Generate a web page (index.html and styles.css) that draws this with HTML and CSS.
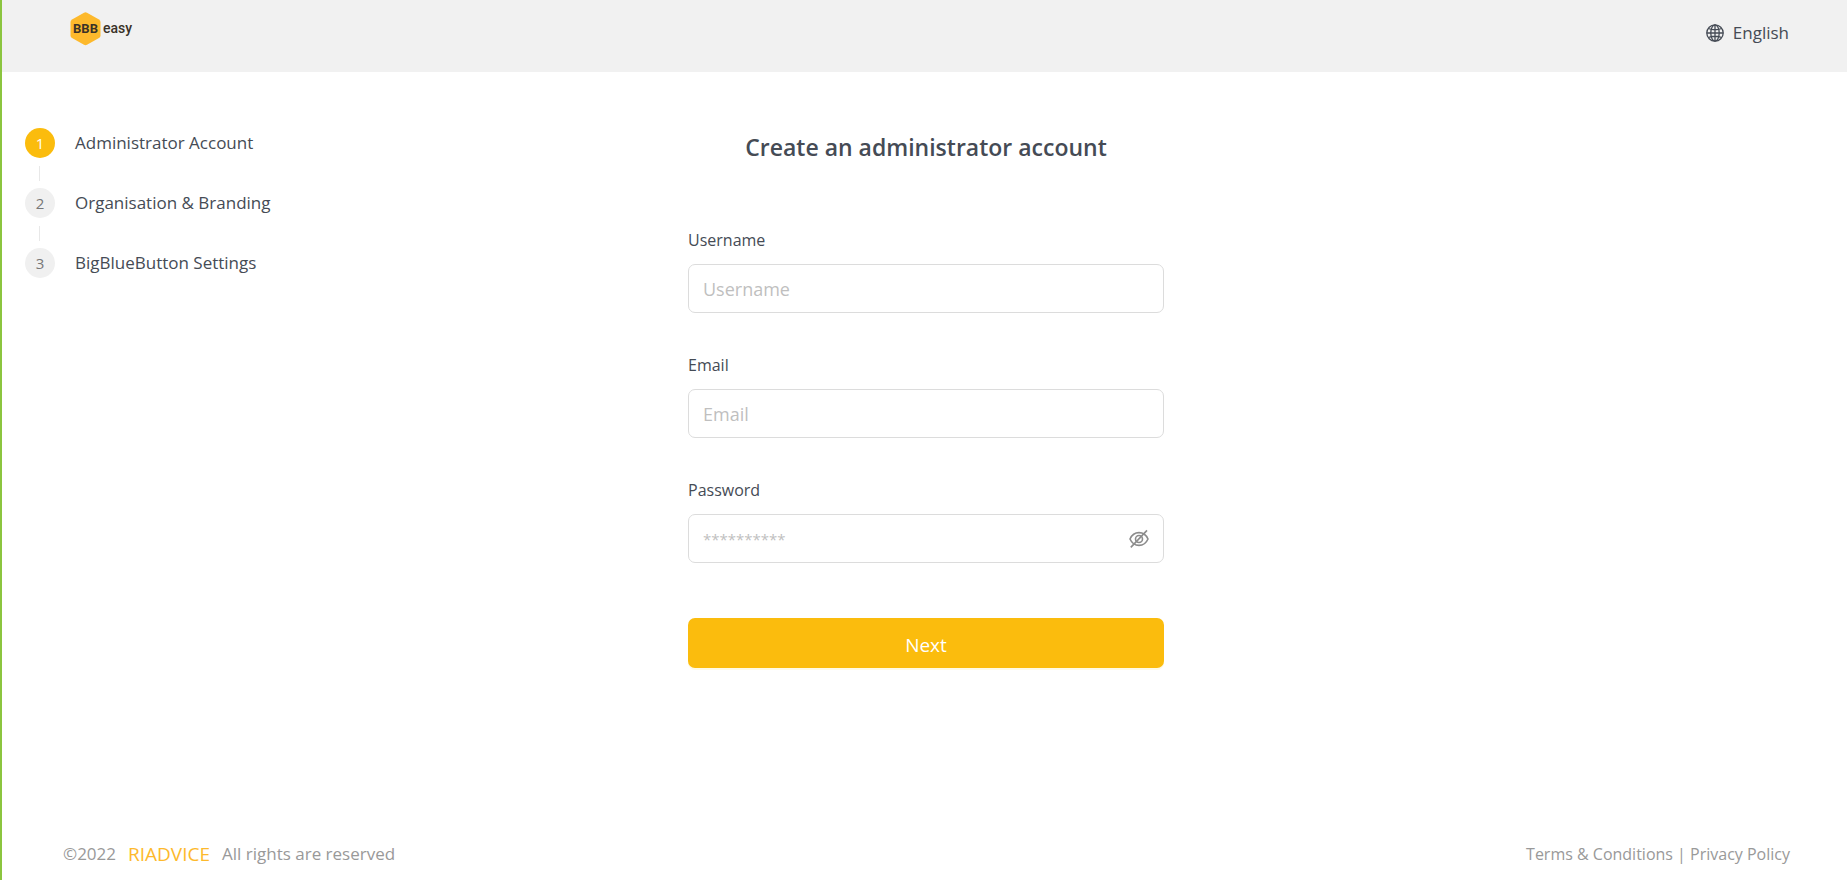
FILE: index.html
```html
<!DOCTYPE html>
<html lang="en">
<head>
<meta charset="utf-8">
<meta name="viewport" content="width=device-width, initial-scale=1">
<title>BBB easy</title>
<link rel="stylesheet" href="styles.css">
</head>
<body class="page">
  <header class="header">
    <a class="logo" href="#" aria-label="BBB easy">
      <svg class="logo-mark" viewBox="0 0 64 34" aria-hidden="true">
        <path d="M14 .7Q15.500 0 17 .7L29 7.500Q30.500 8.500 30.500 10V23.500Q30.500 25 29 26L17 32.800Q15.500 33.600 14 32.800L2 26Q.5 25 .5 23.500V10Q.5 8.500 2 7.500Z" fill="#fdb92c"/>
        <text class="logo-bbb" x="15.500" y="21" text-anchor="middle">BBB</text>
        <text class="logo-easy" x="33" y="21">easy</text>
      </svg>
    </a>
    <button class="language" type="button">
      <svg class="globe" viewBox="0 0 18 18" fill="none" stroke="currentColor" stroke-width="1.300" aria-hidden="true">
        <circle cx="9" cy="9" r="8.200"/>
        <ellipse cx="9" cy="9" rx="4.200" ry="8.200"/>
        <path d="M9 .8V17.200M.8 9H17.200M2.400 4.500Q9 7 15.600 4.500M2.400 13.500Q9 11 15.600 13.500"/>
      </svg>
      <span>English</span>
    </button>
  </header>

  <main class="main">
    <ol class="steps">
      <li class="step step-active"><span class="step-number">1</span><span>Administrator Account</span></li>
      <li class="step"><span class="step-number">2</span><span>Organisation &amp; Branding</span></li>
      <li class="step"><span class="step-number">3</span><span>BigBlueButton Settings</span></li>
    </ol>

    <form class="form">
      <h1 class="title">Create an administrator account</h1>
      <div class="field">
        <label class="label" for="username">Username</label>
        <div class="control"><input class="input" id="username" type="text" placeholder="Username"></div>
      </div>
      <div class="field">
        <label class="label" for="email">Email</label>
        <div class="control"><input class="input" id="email" type="email" placeholder="Email"></div>
      </div>
      <div class="field">
        <label class="label" for="password">Password</label>
        <div class="control">
          <input class="input input-password" id="password" type="password" placeholder="**********">
          <button class="reveal" type="button" aria-label="Show password">
            <svg class="eye" viewBox="0 0 20 20" fill="none" stroke="currentColor" stroke-width="1.600" aria-hidden="true">
              <path d="M1 10C3 5.500 6 3.600 10 3.600S17 5.500 19 10C17 14.500 14 16.400 10 16.400S3 14.500 1 10Z"/>
              <circle cx="10" cy="10" r="3.500"/>
              <path d="M18 1.400 1.800 18.400"/>
            </svg>
          </button>
        </div>
      </div>
      <button class="next" type="submit">Next</button>
    </form>
  </main>

  <footer class="footer">
    <p class="copyright"><span>©2022</span><a class="brand" href="#">RIADVICE</a><span>All rights are reserved</span></p>
    <p class="legal"><a class="legal-link" href="#">Terms &amp; Conditions</a> | <a class="legal-link" href="#">Privacy Policy</a></p>
  </footer>
</body>
</html>
```
FILE: styles.css
```css
* {
  box-sizing: border-box;
}

.page {
  display: flex;
  flex-direction: column;
  min-height: 100vh;
  margin: 0;
  border-left: 2px solid #8bc53f;
  background: #fff;
  color: #454b55;
  font-family: "Segoe UI", "Open Sans", "Noto Sans", sans-serif;
  font-size: 17px;
  line-height: 24px;
}

.header {
  display: flex;
  justify-content: space-between;
  align-items: flex-start;
  min-height: 72px;
  padding: 12px 58px 0 68px;
  background: #f1f1f1;
}

.logo {
  display: flex;
}

.logo-mark {
  width: 64px;
  height: 34px;
}

.logo-bbb,
.logo-easy {
  font-family: Roboto, sans-serif;
  font-weight: 700;
  fill: #3a3228;
}

.logo-bbb {
  font-size: 13px;
}

.logo-easy {
  font-size: 14px;
  font-weight: 500;
}

.language {
  display: flex;
  align-items: center;
  gap: 9px;
  margin: 0;
  padding: 9px 0 0;
  border: 0;
  background: none;
  color: inherit;
  font: inherit;
}

.globe {
  width: 18px;
  height: 18px;
}

.main {
  display: grid;
  flex: 1;
  grid-template-columns: 1fr minmax(0, 476px) 1fr;
  align-items: start;
  padding: 56px 20px 0 23px;
}

.steps {
  display: grid;
  gap: 30px;
  margin: 0;
  padding: 0;
  list-style: none;
}

.step {
  position: relative;
  display: flex;
  align-items: center;
  gap: 20px;
  height: 30px;
}

.step:not(:last-child)::after {
  position: absolute;
  top: 38px;
  left: 14px;
  width: 1px;
  height: 15px;
  background: #e8e8e8;
  content: "";
}

.step-number {
  width: 30px;
  height: 30px;
  border-radius: 50%;
  background: #f0f0f0;
  color: #777;
  font-size: 15px;
  line-height: 30px;
  text-align: center;
}

.step-active .step-number {
  background: #fbbc0d;
  color: #fff;
}

.form {
  display: flex;
  flex-direction: column;
}

.title {
  margin: 0 0 65px;
  padding-top: 3px;
  font-size: 23px;
  font-weight: 600;
  line-height: 32px;
  text-align: center;
}

.field {
  margin-bottom: 40px;
}

.label {
  display: block;
  margin-bottom: 12px;
  font-size: 16px;
}

.control {
  display: flex;
  align-items: center;
  height: 49px;
  padding: 0 14px;
  border: 1px solid #dcdcdc;
  border-radius: 7px;
}

.input {
  flex: 1;
  min-width: 0;
  padding: 0;
  border: 0;
  outline: 0;
  background: none;
  color: inherit;
  font: inherit;
  font-size: 18px;
}

.input::placeholder {
  color: #bfbfbf;
}

.input-password {
  font-size: 15px;
}

.reveal {
  display: flex;
  padding: 0;
  border: 0;
  background: none;
  color: #8c8c8c;
}

.eye {
  width: 20px;
  height: 20px;
}

.next {
  height: 50px;
  margin-top: 15px;
  padding: 3px 0 0;
  border: 0;
  border-radius: 7px;
  background: #fbbc0d;
  box-shadow: 0 2px 0 #fffbe6;
  color: #fff;
  font: inherit;
  font-size: 19px;
}

.footer {
  display: flex;
  justify-content: space-between;
  padding: 0 57px 14px 61px;
  color: #999;
}

.copyright,
.legal {
  margin: 0;
}

.copyright {
  display: flex;
  gap: 12px;
}

.brand {
  color: #fdb92c;
  font-size: 19px;
  text-decoration: none;
}

.legal {
  font-size: 16px;
}

.legal-link {
  color: inherit;
  text-decoration: none;
}
```
